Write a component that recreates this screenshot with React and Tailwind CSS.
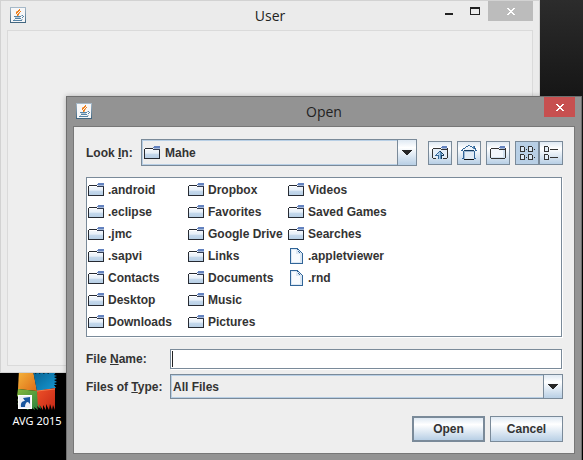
import React from "react";

const FILES = [
  [".android"], [".eclipse"], [".jmc"], [".sapvi"], ["Contacts"], ["Desktop"], ["Downloads"],
  ["Dropbox"], ["Favorites"], ["Google Drive"], ["Links"], ["Documents"], ["Music"], ["Pictures"],
  ["Videos"], ["Saved Games"], ["Searches"], [".appletviewer", true], [".rnd", true],
];

const steel = "bg-linear-to-b from-[#dfe9f3] via-white via-30% to-[#b8cfe5]";

function Folder() {
  return (
    <svg className="size-4 shrink-0" viewBox="0 0 16 16" shapeRendering="crispEdges" aria-hidden="true">
      <defs>
        <linearGradient id="folderFill" x1="0" y1="0" x2="0" y2="1">
          <stop offset="0" stopColor="#f4f8fc" />
          <stop offset=".45" stopColor="#e8f0f8" />
          <stop offset=".6" stopColor="#c4d8ec" />
          <stop offset="1" stopColor="#b8cfe5" />
        </linearGradient>
      </defs>
      <path d="M1 4h14v9H1z" fill="url(#folderFill)" />
      <path d="M1 4h9v1H1z" fill="#fff" />
      <path d="M1 3h8v1H1zM0 4h1v9H0zM0 13h16v1H0zM15 5h1v9h-1z" fill="#262a32" />
      <path d="M10 1h6v2h-6zM9 2h1v1H9z" fill="#6382bf" />
      <path d="M10 3h6v1h-6z" fill="#a3b8d8" />
      <path d="M9 4h7v1H9z" fill="#333d55" />
    </svg>
  );
}

function Doc() {
  return (
    <svg className="size-4 shrink-0" viewBox="0 0 16 16" shapeRendering="crispEdges" aria-hidden="true">
      <path d="M3 1h6l5 5v9H3z" fill="#dce8f4" />
      <path d="M4 2h4v4h4v8H4z" fill="#f8fbfe" />
      <path d="M2 0h8v1H3v14h11v1H2zM14 5h1v11h-1zM10 1h1v1h-1zM11 2h1v1h-1zM12 3h1v1h-1zM13 4h1v1h-1zM9 1h1v1H9zM10 3h1v1h-1zM11 4h1v1h-1z" fill="#316598" />
    </svg>
  );
}

function JavaIcon() {
  return (
    <svg className="size-4" viewBox="0 0 16 16" shapeRendering="crispEdges" aria-hidden="true">
      <defs>
        <linearGradient id="javaEdge" x1="0" y1="0" x2="0" y2="1">
          <stop offset="0" stopColor="#a9bccb" />
          <stop offset="1" stopColor="#3f647e" />
        </linearGradient>
      </defs>
      <rect width="16" height="16" rx="1" fill="url(#javaEdge)" />
      <rect x="1" y="1" width="14" height="14" fill="#f7f7f8" />
      <path d="M9 2h1v2H9zM8 3h1v2H8zM7 4h1v2H7zM6 5h1v2H6zM7 7h1v2H7zM10 4h1v1h-1zM9 5h1v1H9zM8 6h1v2H8z" fill="#ee8120" />
      <path d="M6 4h1v1H6zM9 6h1v1H9zM8 8h1v1H8z" fill="#f7bd85" />
      <path d="M4 9h7v1H4zM5 11h6v1H5zM3 13h9v1H3zM12 8h1v1h-1zM13 9h1v1h-1zM12 10h1v1h-1z" fill="#5684a6" />
      <path d="M5 10h5v1H5zM11 8h1v1h-1zM4 12h1v1H4zM11 12h2v1h-2z" fill="#b4c8d7" />
    </svg>
  );
}

function Cross() {
  return (
    <svg className="h-[7px] w-2" viewBox="0 0 8 7" shapeRendering="crispEdges" aria-hidden="true">
      <path d="M0 0h2v1h1v1h2V1h1V0h2v1H7v1H6v1H5v1h1v1h1v1h1v1H6V6H5V5H3v1H2v1H0V6h1V5h1V4h1V3H2V2H1V1H0z" fill="#fff" />
    </svg>
  );
}

function Arrow() {
  return (
    <span className={`pointer-events-none absolute inset-y-0 right-0 flex w-5 items-center justify-center border border-[#7a8a99] ${steel}`}>
      <svg className="h-[5px] w-[10px]" viewBox="0 0 10 5" shapeRendering="crispEdges" aria-hidden="true">
        <path d="M0 0h10v1H9v1H8v1H7v1H6v1H4V4H3V3H2V2H1V1H0z" fill="#262626" />
      </svg>
    </span>
  );
}

function UpIcon() {
  return (
    <svg className="size-4" viewBox="0 0 16 16" shapeRendering="crispEdges" aria-hidden="true">
      <path d="M1 4h14v9H1z" fill="#e4eef8" />
      <path d="M1 3h8v1H1zM0 4h1v9H0zM1 13h3v1H1zM11 13h4v1h-4zM15 3h1v10h-1zM9 4h6v1H9z" fill="#333" />
      <path d="M10 1h5v1h-5zM9 2h6v1H9z" fill="#6382bf" />
      <path d="M10 3h5v1h-5z" fill="#a3b8d8" />
      <path d="M7 6h1v1H7zM6 7h1v1H6zM5 8h1v1H5zM4 9h1v1H4zM3 10h3v1H3zM6 10h1v4H6z" fill="#316598" />
      <path d="M7 7h1v7H7zM6 8h1v2H6z" fill="#a9cbe8" />
      <path d="M8 7h1v7H8z" fill="#5b8fbd" />
      <path d="M8 6h1v1H8zM9 7h1v1H9zM10 8h1v1h-1zM11 9h1v1h-1zM9 10h3v1H9zM9 11h1v3H9z" fill="#163b5d" />
      <path d="M9 8h1v2H9z" fill="#5b8fbd" />
    </svg>
  );
}

function HomeIcon() {
  return (
    <svg className="size-4" viewBox="0 0 16 16" shapeRendering="crispEdges" aria-hidden="true">
      <path d="M3 6h10v8H3z" fill="#e1ebf5" />
      <path d="M6 2h4v1h2v1h2v1H2V4h2V3h2z" fill="#edf4fb" />
      <path d="M7 0h1v1H7zM5 1h2v1H5zM9 1h2v1H9zM4 2h1v1H4zM11 2h1v1h-1zM13 1h1v3h-1zM2 3h2v1H2zM1 4h1v1H1zM14 3h1v2h-1zM0 5h2v1H0zM14 5h2v1h-2zM2 6h1v8H2zM13 6h1v8h-1zM1 13h1v1H1zM14 13h1v1h-1z" fill="#316598" />
      <path d="M8 0h1v1H8zM12 1h1v3h-1z" fill="#5b8fbd" />
      <path d="M3 5h10v1H3z" fill="#163b5d" />
      <path d="M3 14h10v1H3z" fill="#111" />
      <path d="M3 6h10v1H4v7H3z" fill="#9eb9d4" />
    </svg>
  );
}

function NewFolderIcon() {
  return (
    <svg className="size-4" viewBox="0 0 16 16" shapeRendering="crispEdges" aria-hidden="true">
      <path d="M1 4h14v9H1z" fill="#d3e2f0" />
      <path d="M1 4h12v8H1z" fill="#f2f6fb" />
      <path d="M1 3h8v1H1zM0 4h1v9H0zM1 13h14v1H1zM15 3h1v10h-1zM9 4h6v1H9z" fill="#333" />
      <path d="M10 1h5v1h-5zM9 2h6v1H9z" fill="#6382bf" />
      <path d="M10 3h5v1h-5z" fill="#a3b8d8" />
    </svg>
  );
}

function ListIcon() {
  return (
    <svg className="size-4" viewBox="0 0 16 16" shapeRendering="crispEdges" aria-hidden="true">
      {[[1, 1], [9, 1], [1, 9], [9, 9]].map(([x, y]) => (
        <g key={`${x}-${y}`} transform={`translate(${x} ${y})`}>
          <path d="M0 0h4v1h1v5H0z" fill="#333" />
          <path d="M1 1h3v4H1z" fill="#dbe8f5" />
          <path d="M6 3h1v1H6z" fill="#333" />
        </g>
      ))}
    </svg>
  );
}

function DetailIcon() {
  return (
    <svg className="size-4" viewBox="0 0 16 16" shapeRendering="crispEdges" aria-hidden="true">
      {[1, 9].map((y) => (
        <g key={y} transform={`translate(1 ${y})`}>
          <path d="M0 0h4v1h1v5H0z" fill="#333" />
          <path d="M1 1h3v4H1z" fill="#e4eef8" />
          <path d="M6 3h8v1H6z" fill="#333" />
        </g>
      ))}
    </svg>
  );
}

function Tool({ label, pressed, children }) {
  return (
    <button type="button" aria-label={label} aria-pressed={pressed} className={`flex size-6 items-center justify-center border border-[#7a8a99] ${pressed ? "bg-[#b8cfe5]" : steel}`}>
      {children}
    </button>
  );
}

function Combo({ id, value, icon }) {
  return (
    <div className="relative min-w-0 flex-1">
      {icon && <span className="pointer-events-none absolute inset-y-0 left-[3px] flex items-center">{icon}</span>}
      <select id={id} defaultValue={value} className={`block w-full appearance-none border border-[#7a8a99] bg-[#eeeeee] text-xs font-bold text-[#333333] inset-ring inset-ring-[#b8cfe5] outline-none ${icon ? "h-[27px] pl-[23px]" : "h-[25px] pl-[2px]"}`}>
        <option>{value}</option>
      </select>
      <Arrow />
    </div>
  );
}

function AvgIcon() {
  return (
    <svg className="h-12 w-10" viewBox="0 0 40 48" aria-hidden="true">
      <defs>
        <linearGradient id="orange" x1="0" y1="0" x2="1" y2="1"><stop offset="0" stopColor="#f6b73c" /><stop offset="1" stopColor="#dd6b18" /></linearGradient>
        <linearGradient id="blue" x1="0" y1="0" x2="1" y2="1"><stop offset="0" stopColor="#08608f" /><stop offset="1" stopColor="#169ad5" /></linearGradient>
        <linearGradient id="green" x1="0" y1="0" x2="1" y2="1"><stop offset="0" stopColor="#86b83c" /><stop offset="1" stopColor="#237f3e" /></linearGradient>
        <linearGradient id="red" x1="0" y1="0" x2="1" y2="1"><stop offset="0" stopColor="#ef5128" /><stop offset="1" stopColor="#c52817" /></linearGradient>
      </defs>
      <path d="M2 6h14l4 21L1 25z" fill="url(#orange)" />
      <path d="M1 25l19 2 4 18-4-3 1 4-4-3 1 3-5-3-2 3-5-3-4 2 1-4-3-1 3-2-3-2 3-2-3-2z" fill="url(#green)" />
      <path d="M16 7l3 3 1-3 3 3 1-3 3 3 2-3 2 3 3-3 5 1-2 3 3 1-3 1 3 2-3 1 3 2-3 1 3 2-3 0 2 3-19 3z" fill="url(#blue)" />
      <path d="M20 27l18-3v22l-2-5-1 5-2-6-1 6-3-6v6l-3-5v5l-4-6-1 5z" fill="url(#red)" />
      <path d="M20 27l18-2" stroke="#f3794a" />
      <rect x="1.500" y="31.500" width="13" height="13" fill="#edf0f5" stroke="#fff" />
      <path d="M4 43c-.6-4 1-6 4-6l-2-3 7-1v7l-2-2c-2 0-3 2-3 5z" fill="#19579e" />
    </svg>
  );
}

export default function App() {
  return (
    <main className="relative min-h-screen overflow-hidden bg-linear-to-b from-[#2c2c2c] via-[#171717] via-20% to-black font-['Liberation_Sans',Arial,sans-serif] text-xs text-[#333333]">
      <div className="absolute inset-x-0 top-[260px] bottom-0 bg-black" />
      <div className="absolute top-[364px] left-1 flex w-[66px] flex-col items-center font-['Noto_Sans',sans-serif] text-white">
        <AvgIcon />
        <span className="text-[11px] leading-[18px] whitespace-nowrap">AVG 2015</span>
      </div>

      <section aria-label="User" className="absolute top-0 right-[43px] left-0 border border-[#d2d2d2] bg-[#ebebeb] px-[6px] pb-[6px]">
        <header className="relative flex h-[29px] items-center justify-center font-['Open_Sans','Noto_Sans',sans-serif] text-sm text-[#222222]">
          <span className="absolute top-[6px] left-[3px]"><JavaIcon /></span>
          <h1>User</h1>
          <div className="absolute top-0 right-0 flex h-5">
            <button type="button" aria-label="Minimize" className="flex w-[26px] items-end justify-center pb-[6px]"><span className="h-[2px] w-2 bg-[#222222]" /></button>
            <button type="button" aria-label="Maximize" className="flex w-[26px] items-center justify-center"><span className="h-2 w-[10px] border border-t-2 border-[#222222]" /></button>
            <button type="button" aria-label="Close" className="flex w-[45px] items-center justify-center bg-[#bcbcbc]"><Cross /></button>
          </div>
        </header>
        <div className="h-[336px] border border-[#dadada] bg-[#eeeeee]" />
      </section>

      <section role="dialog" aria-label="Open" className="absolute top-24 right-px left-[66px] border border-[#6e6e6e] bg-[#939393] px-[6px] pb-[6px] shadow-[0_0_5px_rgba(0,0,0,0.25)]">
        <header className="relative flex h-[29px] items-center justify-center font-['Open_Sans','Noto_Sans',sans-serif] text-sm text-[#222222]">
          <span className="absolute top-[6px] left-[3px]"><JavaIcon /></span>
          <h2>Open</h2>
          <button type="button" aria-label="Close dialog" className="absolute top-0 right-0 flex h-5 w-[31px] items-center justify-center bg-[#c75050]"><Cross /></button>
        </header>
        <form className="border border-[#777777] bg-[#eeeeee] pt-3 pr-[11px] pb-[11px] pl-3 font-bold" onSubmit={(e) => e.preventDefault()}>
          <div className="flex items-center">
            <label htmlFor="look" className="w-[55px] shrink-0">Look <u>I</u>n:</label>
            <Combo id="look" value="Mahe" icon={<Folder />} />
            <div className="ml-[11px] flex gap-[5px]">
              <Tool label="Up one level"><UpIcon /></Tool>
              <Tool label="Home"><HomeIcon /></Tool>
              <Tool label="Create new folder"><NewFolderIcon /></Tool>
              <div className="flex">
                <Tool label="List" pressed><ListIcon /></Tool>
                <Tool label="Details"><DetailIcon /></Tool>
              </div>
            </div>
          </div>
          <ul className="mt-[11px] mr-px grid h-40 auto-cols-[100px] grid-flow-col grid-rows-[repeat(7,22px)] border border-[#7a8a99] bg-white pt-px pl-px shadow-[1px_1px_0_#fff]">
            {FILES.map(([name, doc]) => (
              <li key={name} className="flex items-center gap-1 whitespace-nowrap">{doc ? <Doc /> : <Folder />}{name}</li>
            ))}
          </ul>
          <div className="mt-3 mr-px flex items-center">
            <label htmlFor="name" className="w-[84px] shrink-0">File <u>N</u>ame:</label>
            <div className="relative min-w-0 flex-1">
              <input id="name" type="text" className="block h-5 w-full border border-[#7a8a99] bg-white px-1 font-normal caret-transparent shadow-[1px_1px_0_#fff] outline-none" />
              <span className="absolute inset-y-[2px] left-[2px] w-px bg-[#222222]" />
            </div>
          </div>
          <div className="mt-[5px] flex items-center">
            <label htmlFor="type" className="w-[84px] shrink-0">Files of <u>T</u>ype:</label>
            <Combo id="type" value="All Files" />
          </div>
          <div className="mt-[17px] flex justify-end gap-[5px]">
            <button type="submit" className={`h-[26px] w-[73px] border-2 border-[#7a8a99] ${steel}`}>Open</button>
            <button type="button" className={`h-[26px] w-[73px] border border-[#7a8a99] ${steel}`}>Cancel</button>
          </div>
        </form>
      </section>
    </main>
  );
}
